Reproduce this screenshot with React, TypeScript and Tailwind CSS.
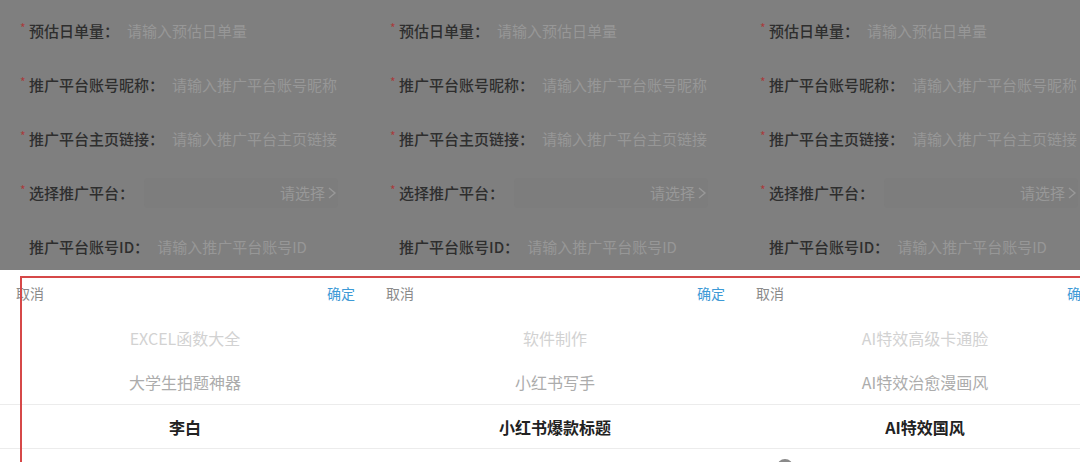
import React from "react";

type Panel = {
  items: [string, string, string];
};

const PANELS: Panel[] = [
  { items: ["EXCEL函数大全", "大学生拍题神器", "李白"] },
  { items: ["软件制作", "小红书写手", "小红书爆款标题"] },
  { items: ["AI特效高级卡通脸", "AI特效治愈漫画风", "AI特效国风"] },
];

const FONT = "font-['Noto_Sans_CJK_SC','Noto_Sans',sans-serif]";

const Row = ({
  label,
  placeholder,
  required = true,
  select = false,
}: {
  label: string;
  placeholder: string;
  required?: boolean;
  select?: boolean;
}) => (
  <div className="h-[54px] flex items-center pl-[20px] pr-[32px]">
    <span className="w-[9px] text-[12px] leading-none text-[#a83c3c] self-center -mt-[7px]">
      {required ? "*" : ""}
    </span>
    <span className="text-[15px] font-medium text-[#2e2e2e] whitespace-nowrap">{label}</span>
    {select ? (
      <div className="flex-1 flex items-center justify-end h-[30px] ml-[10px] rounded-sm bg-[#7d7d7d]">
        <span className="text-[15px] text-[#989898] whitespace-nowrap">请选择</span>
        <svg width="12" height="14" viewBox="0 0 12 14" className="ml-[1px]">
          <path d="M3 2 L9 7 L3 12" fill="none" stroke="#989898" strokeWidth="1.4" />
        </svg>
      </div>
    ) : (
      <span className="ml-[8px] text-[15px] text-[#979797] whitespace-nowrap">{placeholder}</span>
    )}
  </div>
);

const PanelView = ({ panel }: { panel: Panel }) => (
  <div className="w-[370px] shrink-0 flex flex-col h-[462px]">
    <div className="h-[270px] bg-[#7f7f7f] pt-[4px]">
      <Row label="预估日单量：" placeholder="请输入预估日单量" />
      <Row label="推广平台账号昵称：" placeholder="请输入推广平台账号昵称" />
      <Row label="推广平台主页链接：" placeholder="请输入推广平台主页链接" />
      <Row label="选择推广平台：" placeholder="" select />
      <Row label="推广平台账号ID：" placeholder="请输入推广平台账号ID" required={false} />
    </div>
    <div className="flex-1 bg-white overflow-hidden">
      <div className="h-[46px] flex items-center justify-between pl-[16px] pr-[15px] text-[14px]">
        <span className="text-[#8a8a8a]">取消</span>
        <span className="text-[#3d9ad6]">确定</span>
      </div>
      <div className="h-[44px] flex items-center justify-center text-[16px] text-[#d2d2d2]">
        {panel.items[0]}
      </div>
      <div className="h-[44px] flex items-center justify-center text-[16px] text-[#acacac]">
        {panel.items[1]}
      </div>
      <div className="h-[45px] flex items-center justify-center text-[16px] font-bold text-[#222] border-y border-[#ececec]">
        {panel.items[2]}
      </div>
    </div>
  </div>
);

export default function App() {
  return (
    <div className={`relative w-[1080px] h-[462px] overflow-hidden bg-white ${FONT}`}>
      <div className="flex">
        {PANELS.map((p, i) => (
          <PanelView key={i} panel={p} />
        ))}
      </div>
      {/* highlight frame */}
      <div className="absolute left-[20px] top-[276px] w-[1100px] h-[200px] border-2 border-[#d64848]" />
      {/* partly visible handle */}
      <div className="absolute left-[777px] top-[459px] w-[16px] h-[16px] rounded-full bg-[#8a8a8a]" />
    </div>
  );
}
